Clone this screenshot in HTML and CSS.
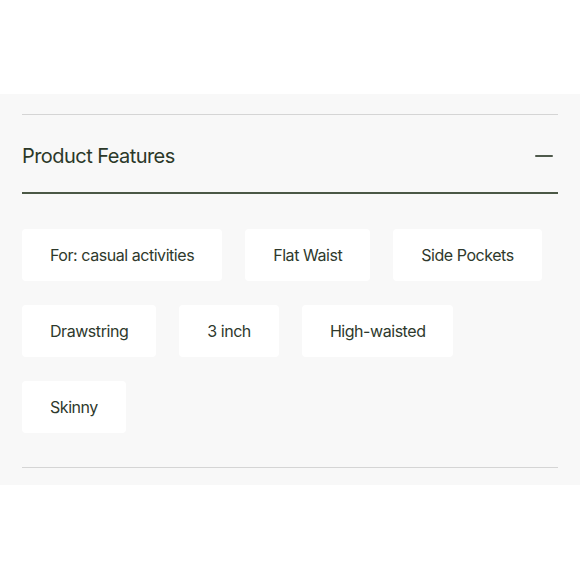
FILE: index.html
```html
<!DOCTYPE html>
<html lang="en">
<head>
<meta charset="utf-8">
<title>Product Features</title>
<link rel="stylesheet" href="styles.css">
</head>
<body>
<section class="panel">
  <div class="accordion">
    <div class="acc-header">
      <h2 class="acc-title">Product Features</h2>
      <span class="acc-toggle" aria-hidden="true"></span>
    </div>
    <div class="acc-body">
      <ul class="chips">
        <li class="chip">For: casual activities</li>
        <li class="chip">Flat Waist</li>
        <li class="chip">Side Pockets</li>
        <li class="chip">Drawstring</li>
        <li class="chip">3 inch</li>
        <li class="chip">High-waisted</li>
        <li class="chip">Skinny</li>
      </ul>
    </div>
  </div>
</section>
</body>
</html>
```

FILE: styles.css
```css
html, body {
  margin: 0;
  padding: 0;
  background: #ffffff;
}

body {
  font-family: Inter, "Noto Sans", "Liberation Sans", sans-serif;
  color: #2e392c;
}

.panel {
  margin-top: 94px;
  height: 391px;
  box-sizing: border-box;
  background: #f8f8f8;
  padding: 20px 22px 0;
}

.accordion {
  border-top: 1px solid #d5d5d5;
  border-bottom: 1px solid #d5d5d5;
}

.acc-header {
  display: flex;
  align-items: center;
  justify-content: space-between;
  height: 79px;
  padding-top: 4px;
  box-sizing: border-box;
  border-bottom: 2px solid #4b5846;
}

.acc-title {
  margin: 0;
  font-size: 20px;
  font-weight: 400;
  color: #2b3829;
  letter-spacing: -0.55px;
}

.acc-toggle {
  display: block;
  width: 18px;
  height: 2px;
  border-radius: 1px;
  background: #4f5a4c;
  margin-right: 5px;
}

.acc-body {
  padding: 35px 0 34px;
}

.chips {
  list-style: none;
  margin: 0;
  padding: 0;
  display: flex;
  flex-wrap: wrap;
  gap: 24px 23px;
}

.chip {
  background: #ffffff;
  border-radius: 4px;
  height: 52px;
  display: flex;
  align-items: center;
  padding: 0 28px;
  font-size: 16px;
  letter-spacing: -0.45px;
  color: #2e392c;
  white-space: nowrap;
}
```
